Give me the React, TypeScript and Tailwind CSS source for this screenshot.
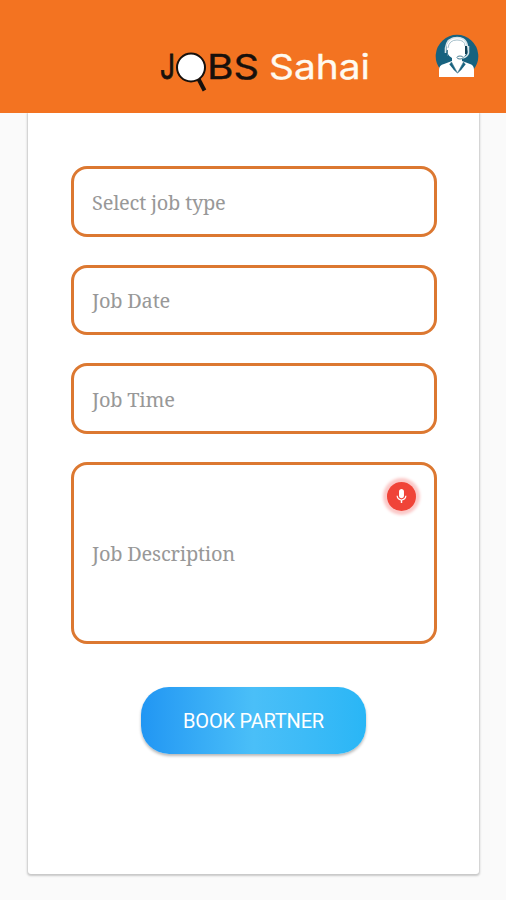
import React from 'react';

const fields: string[] = ['Select job type', 'Job Date', 'Job Time'];

const fieldText =
  "pt-[3px] pl-[18.5px] text-[20px] tracking-[-0.22px] text-[#989898] font-['Noto_Serif','DejaVu_Serif',serif]";

const Logo: React.FC = () => (
  <svg
    width="216"
    height="48"
    viewBox="0 0 216 48"
    fontFamily="Inter, 'Liberation Sans', sans-serif"
    fontSize="34"
    role="img"
    aria-label="Jobs Sahai"
  >
    <g fill="#17100c" stroke="#17100c" strokeWidth="0.4">
      <text x="4" y="31.5" strokeWidth="0.8" textLength="15" lengthAdjust="spacingAndGlyphs">J</text>
      <text x="51" y="31.5" textLength="26.5" lengthAdjust="spacingAndGlyphs">B</text>
      <text x="77.5" y="31.5" textLength="25.5" lengthAdjust="spacingAndGlyphs">S</text>
    </g>
    <path d="M42.5 32l6 11.5" stroke="#17100c" strokeWidth="4" />
    <circle cx="35" cy="20.5" r="14" fill="#fff" stroke="#17100c" strokeWidth="2" />
    <text x="113" y="31.5" fill="#fffaf0" stroke="#fffaf0" strokeWidth="0.3" textLength="101" lengthAdjust="spacingAndGlyphs">Sahai</text>
  </svg>
);

const SupportIcon: React.FC = () => (
  <svg width="44" height="44" viewBox="0 0 44 44">
    <path d="M5 35A21.3 21.3 0 1 1 39 35Z" fill="#17627f" />
    <path d="M4 43v-7q0-5 5-6l8-3v-3Q10 20 12 10 15 3 22 3t10 7q2 10-5 14v3l8 3q4 1 4 6v7Z" fill="#fff" />
    <path d="M10.5 19V14Q12 3.5 22 3.5t10.5 10" fill="none" stroke="#d5e2e7" strokeWidth="1.6" />
    <path d="M13 14Q14 6 22 6t8 6" fill="none" stroke="#7fa5b4" strokeWidth="0.7" />
    <path d="M31 12v8" stroke="#123f53" strokeWidth="2" />
    <path d="M33.5 12v7q-1 4-6 5" fill="none" stroke="#d5e2e7" strokeWidth="1.5" />
    <path d="M12.5 16v6" stroke="#4c8094" strokeWidth="1" />
    <ellipse cx="25" cy="23.5" rx="3" ry="1.5" fill="#fff" stroke="#4c8094" strokeWidth="1" />
    <path d="M14.5 30.5l2-2.5 6 11-4-3.5M30.5 30.5L28.5 28l-6 11 4-3.5" fill="#17627f" stroke="#4c8094" strokeWidth="0.6" />
  </svg>
);

const MicButton: React.FC = () => (
  <button
    type="button"
    aria-label="Record description"
    className="absolute top-[17.5px] right-[18px] flex size-[29px] items-center justify-center rounded-full bg-[#f04438] shadow-[0_0_3px_4px_#fbc9c8]"
  >
    <svg width="17" height="17" viewBox="0 0 24 24" fill="#fff">
      <path d="M12 14.5c1.9 0 3.5-1.5 3.5-3.5V5c0-1.9-1.6-3.5-3.5-3.5S8.5 3.1 8.5 5v6c0 2 1.6 3.5 3.5 3.5z" />
      <path d="M17.3 11c0 3-2.54 5.1-5.3 5.1S6.7 14 6.7 11H5c0 3.41 2.72 6.23 6 6.72V21h2v-3.28c3.28-.48 6-3.3 6-6.72h-1.7z" />
    </svg>
  </button>
);

const App: React.FC = () => {
  return (
    <div className="h-[900px] w-[506px] overflow-hidden bg-[#fafafa]">
      <header className="flex h-[113px] items-start justify-between bg-[#f37321] pt-[34px] pr-[27px] pl-[156px]">
        <div className="pt-[13px]">
          <Logo />
        </div>
        <SupportIcon />
      </header>
      <main className="ml-[28px] flex h-[761px] w-[451px] flex-col items-center rounded-b-[3px] bg-white pt-[53px] shadow-[0_1px_2px_1px_#c8c8c8] [clip-path:inset(0_-5px_-5px_-5px)]">
        <form className="flex w-[366px] flex-col gap-[28px]">
          {fields.map((label) => (
            <div
              key={label}
              className={`flex h-[70.5px] items-center rounded-[16px] border-3 border-[#dc7831] ${fieldText}`}
            >
              {label}
            </div>
          ))}
          <div
            className={`relative flex h-[182px] items-center rounded-[16px] border-3 border-[#dc7831] ${fieldText}`}
          >
            Job Description
            <MicButton />
          </div>
        </form>
        <button
          type="button"
          className="mt-[43px] h-[67px] w-[225px] rounded-[28px] bg-linear-to-r from-[#2196f3] via-[#4abff8] to-[#29b6f6] pt-px font-['Roboto',sans-serif] text-[20px] tracking-[-0.2px] text-white shadow-[0_2px_3px_#b8b8b8]"
        >
          BOOK PARTNER
        </button>
      </main>
    </div>
  );
};

export default App;
